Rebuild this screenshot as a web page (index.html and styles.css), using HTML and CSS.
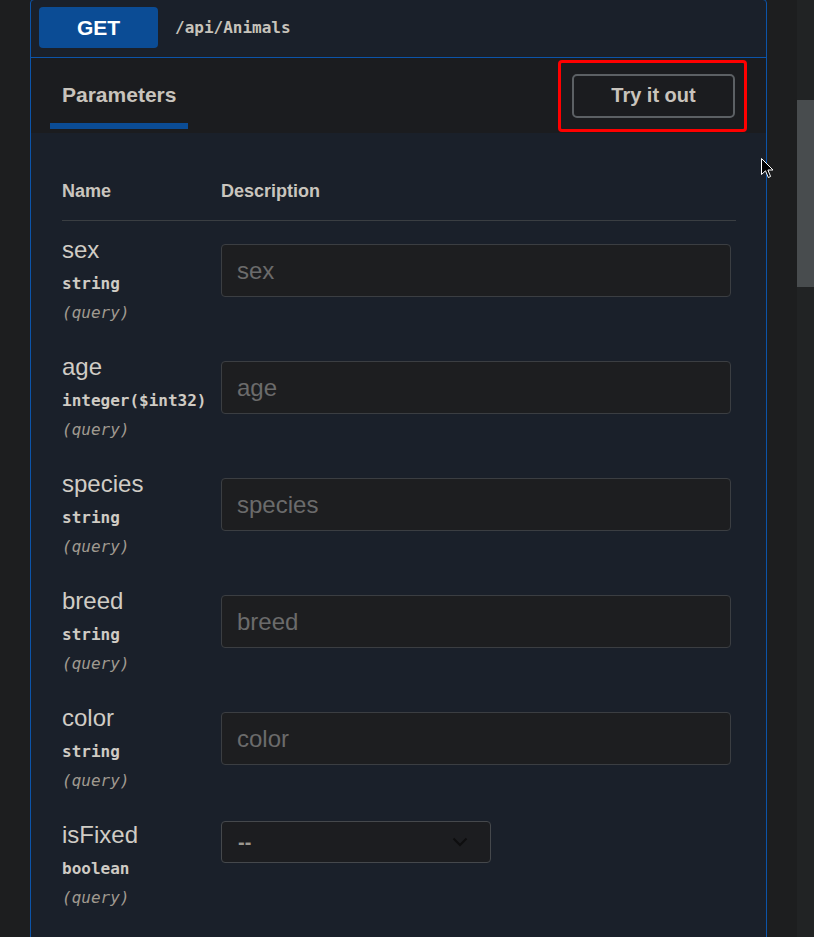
FILE: index.html
```html
<!DOCTYPE html>
<html>
<head>
<meta charset="utf-8">
<link rel="stylesheet" href="styles.css">
</head>
<body>
<div class="page">
  <div class="main">
    <div class="opblock">
      <div class="summary">
        <span class="method">GET</span>
        <span class="path">/api/Animals</span>
      </div>
      <div class="tabbar">
        <div class="tab">Parameters</div>
        <div class="try-wrap"><button class="try">Try it out</button></div>
      </div>
      <div class="params">
        <div class="head"><div>Name</div><div>Description</div></div>

        <div class="row">
          <div class="pname"><div class="nm">sex</div><div class="type">string</div><div class="in">(query)</div></div>
          <div class="pdesc"><input class="field" placeholder="sex"></div>
        </div>
        <div class="row">
          <div class="pname"><div class="nm">age</div><div class="type">integer($int32)</div><div class="in">(query)</div></div>
          <div class="pdesc"><input class="field" placeholder="age"></div>
        </div>
        <div class="row">
          <div class="pname"><div class="nm">species</div><div class="type">string</div><div class="in">(query)</div></div>
          <div class="pdesc"><input class="field" placeholder="species"></div>
        </div>
        <div class="row">
          <div class="pname"><div class="nm">breed</div><div class="type">string</div><div class="in">(query)</div></div>
          <div class="pdesc"><input class="field" placeholder="breed"></div>
        </div>
        <div class="row">
          <div class="pname"><div class="nm">color</div><div class="type">string</div><div class="in">(query)</div></div>
          <div class="pdesc"><input class="field" placeholder="color"></div>
        </div>
        <div class="row">
          <div class="pname"><div class="nm">isFixed</div><div class="type">boolean</div><div class="in">(query)</div></div>
          <div class="pdesc">
            <div class="select"><span class="sel-val">--</span>
              <svg class="chev" width="16" height="10" viewBox="0 0 16 10"><path d="M1.5 1.5 L8 8 L14.5 1.5" fill="none" stroke="#0e0e0f" stroke-width="2"/></svg>
            </div>
          </div>
        </div>
      </div>
    </div>
  </div>
  <div class="scrollbar"><div class="thumb"></div></div>
  <svg class="cursor" width="14" height="22" viewBox="0 0 14 22"><path d="M0.5 0.5 L0.5 16.5 L4.5 12.8 L7.3 19.5 L9.6 18.5 L6.9 12 L12 12 Z" fill="#000" stroke="#fff" stroke-width="1"/></svg>
</div>
</body>
</html>
```
FILE: styles.css
```css
* { box-sizing: border-box; }
html, body { margin: 0; padding: 0; }
body {
  background: #1d1e1f;
  font-family: "Liberation Sans", Arial, sans-serif;
  color: #c8c4bd;
  overflow: hidden;
}
.page {
  position: relative;
  display: flex;
  height: 937px;
  overflow: hidden;
}
.main {
  flex: 1;
  padding: 0 30px;
}
.opblock {
  margin-top: -1px;
  border: 1px solid #0c54a9;
  border-radius: 4px;
  background: #1a202a;
  min-height: 1000px;
}
.summary {
  display: flex;
  align-items: center;
  padding: 7px 8px 9px;
  border-bottom: 1px solid #0c54a9;
}
.method {
  width: 119px;
  height: 41px;
  background: #0b4c95;
  border-radius: 4px;
  color: #fff;
  font-weight: bold;
  font-size: 21px;
  display: flex;
  align-items: center;
  justify-content: center;
}
.path {
  margin-left: 17px;
  font-family: "DejaVu Sans Mono", monospace;
  font-size: 16px;
  font-weight: bold;
  color: #c7c3bb;
}
.tabbar {
  height: 75px;
  background: #1b1c1f;
  display: flex;
  justify-content: space-between;
  align-items: center;
  padding: 0 31px 0 19px;
}
.tab {
  align-self: flex-end;
  margin-bottom: 4px;
  padding: 25px 12px 16px;
  line-height: 24px;
  font-size: 21px;
  font-weight: bold;
  color: #c8c3bc;
  border-bottom: 6px solid #0b4c95;
}
.try-wrap {
  position: relative;
}
.try-wrap::after {
  content: "";
  position: absolute;
  top: -14px;
  bottom: -14px;
  left: -14px;
  right: -12px;
  border: 3px solid #ff0000;
  border-radius: 4px;
  pointer-events: none;
}
.try {
  display: block;
  width: 163px;
  height: 44px;
  background: transparent;
  border: 2px solid #5c6064;
  border-radius: 5px;
  font-family: "Liberation Sans", Arial, sans-serif;
  font-weight: bold;
  font-size: 20px;
  color: #c8c3bc;
  padding: 0;
}
.params {
  padding: 0 30px 0 31px;
}
.head {
  display: grid;
  grid-template-columns: 159px 1fr;
  padding: 47px 0 18px;
  line-height: 22px;
  font-size: 18px;
  font-weight: bold;
  color: #c9c5be;
  border-bottom: 1px solid #3a3e42;
}
.row {
  display: grid;
  grid-template-columns: 159px 1fr;
  padding: 15px 0 11px;
}
.nm {
  font-size: 24px;
  line-height: 28px;
  color: #d0ccc5;
}
.type {
  font-family: "DejaVu Sans Mono", monospace;
  font-size: 16px;
  font-weight: bold;
  line-height: 29px;
  padding-top: 5px;
  color: #cfcbc4;
  white-space: nowrap;
}
.in {
  font-family: "DejaVu Sans Mono", monospace;
  font-size: 16px;
  font-style: italic;
  line-height: 29px;
  color: #a09a90;
}
.field {
  display: block;
  margin-top: 8px;
  width: 510px;
  height: 53px;
  background: #1d1e20;
  border: 1px solid #3b3e42;
  border-radius: 4px;
  padding: 0 15px;
  font-family: "Liberation Sans", Arial, sans-serif;
  font-size: 24px;
  color: #d0ccc5;
  outline: none;
}
.field::placeholder {
  color: #6b6b6b;
}
.select {
  width: 270px;
  height: 42px;
  background: #1c1d20;
  border: 1px solid #45484c;
  border-radius: 4px;
  display: flex;
  align-items: center;
  justify-content: space-between;
  padding: 0 22px 0 16px;
}
.sel-val {
  font-size: 20px;
  font-weight: bold;
  color: #9c9890;
}
.chev {
  display: block;
}
.scrollbar {
  width: 17px;
  background: #212324;
  padding-top: 100px;
}
.thumb {
  height: 187px;
  background: #484c4e;
}
.cursor {
  position: absolute;
  left: 761px;
  top: 158px;
}
```
